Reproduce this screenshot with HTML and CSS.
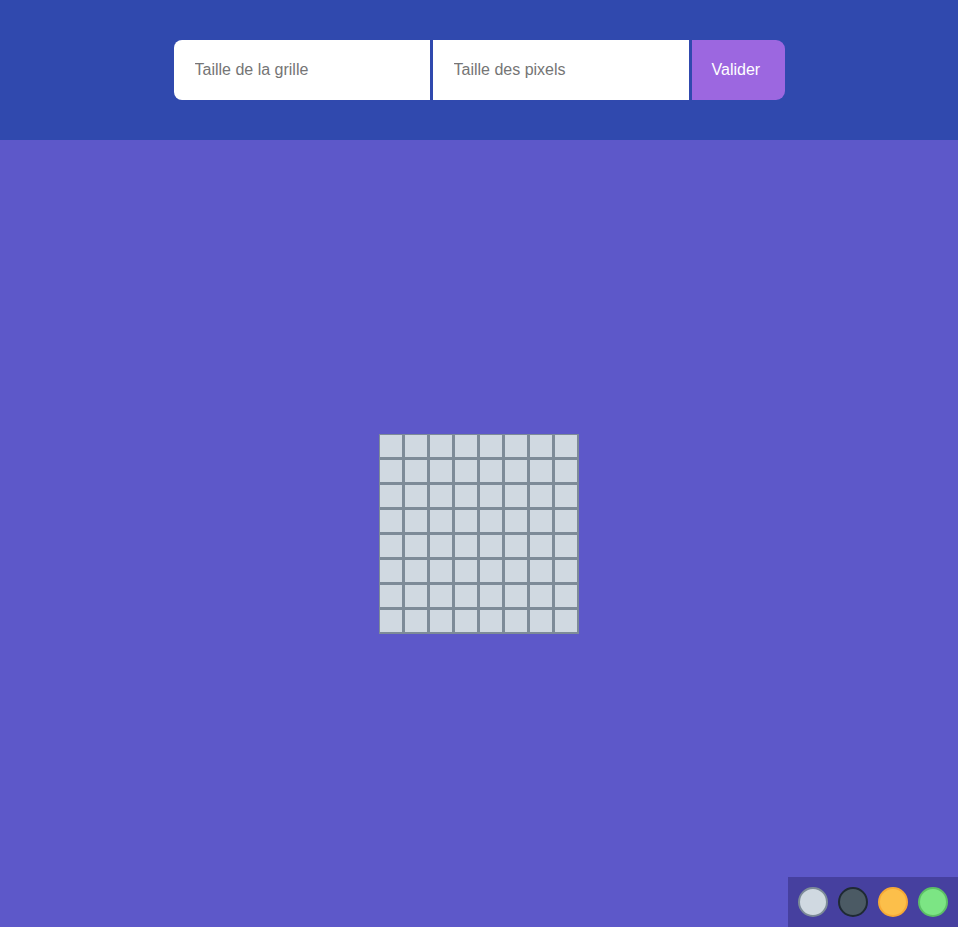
FILE: index.html
```html
<!DOCTYPE html>
<html lang="fr">
<head>
<meta charset="utf-8">
<title>Pixel Art</title>
<link rel="stylesheet" href="styles.css">
</head>
<body>
<header class="header">
  <form class="form">
    <input class="field field-first" type="text" placeholder="Taille de la grille">
    <input class="field" type="text" placeholder="Taille des pixels">
    <button class="submit" type="button">Valider</button>
  </form>
</header>
<main class="board">
  <div class="grid" id="grid"></div>
</main>
<div class="palette">
  <span class="swatch swatch-light"></span>
  <span class="swatch swatch-dark"></span>
  <span class="swatch swatch-orange"></span>
  <span class="swatch swatch-green"></span>
</div>
<script>
  var g = document.getElementById('grid');
  for (var i = 0; i < 64; i++) {
    var c = document.createElement('div');
    c.className = 'cell';
    g.appendChild(c);
  }
</script>
</body>
</html>
```

FILE: styles.css
```css
* { box-sizing: border-box; }
html, body { margin: 0; height: 100%; }
body {
  font-family: "Liberation Sans", Arial, sans-serif;
  background: #5d58c9;
  display: flex;
  flex-direction: column;
}
.header {
  background: #3049ae;
  height: 140px;
  display: flex;
  justify-content: center;
  align-items: center;
  flex-shrink: 0;
}
.form {
  display: flex;
  gap: 3px;
  height: 60px;
}
.field {
  width: 256px;
  height: 60px;
  border: none;
  outline: none;
  padding: 0 20px 0 21px;
  font-family: inherit;
  font-size: 16px;
  color: #333;
  background: #fff;
}
.field::placeholder { color: #757575; }
.field-first { border-radius: 8px 0 0 8px; }
.submit {
  width: 93px;
  height: 60px;
  border: none;
  background: #9c67e0;
  color: #fff;
  font-family: inherit;
  font-size: 16px;
  border-radius: 0 9px 9px 0;
  padding: 0 0 0 20px;
  text-align: left;
}
.board {
  flex: 1;
  display: flex;
  justify-content: center;
  align-items: center;
}
.grid {
  display: grid;
  grid-template-columns: repeat(8, 22px);
  grid-auto-rows: 22px;
  gap: 3px;
  padding: 1px 2px 2px 1px;
  background: #7d8b98;
}
.cell { background: #d0d9e1; }
.palette {
  position: fixed;
  right: 0;
  bottom: 0;
  width: 170px;
  height: 50px;
  background: #46409f;
  display: flex;
  align-items: center;
  gap: 10px;
  padding: 0 10px;
}
.swatch {
  width: 30px;
  height: 30px;
  border-radius: 50%;
  border: 2px solid;
}
.swatch-light { background: #d0d9e1; border-color: #7d8b98; }
.swatch-dark { background: #4b5a64; border-color: #1f2a33; }
.swatch-orange { background: #fcbf4a; border-color: #f6a935; }
.swatch-green { background: #7ce584; border-color: #5cc065; }
```
